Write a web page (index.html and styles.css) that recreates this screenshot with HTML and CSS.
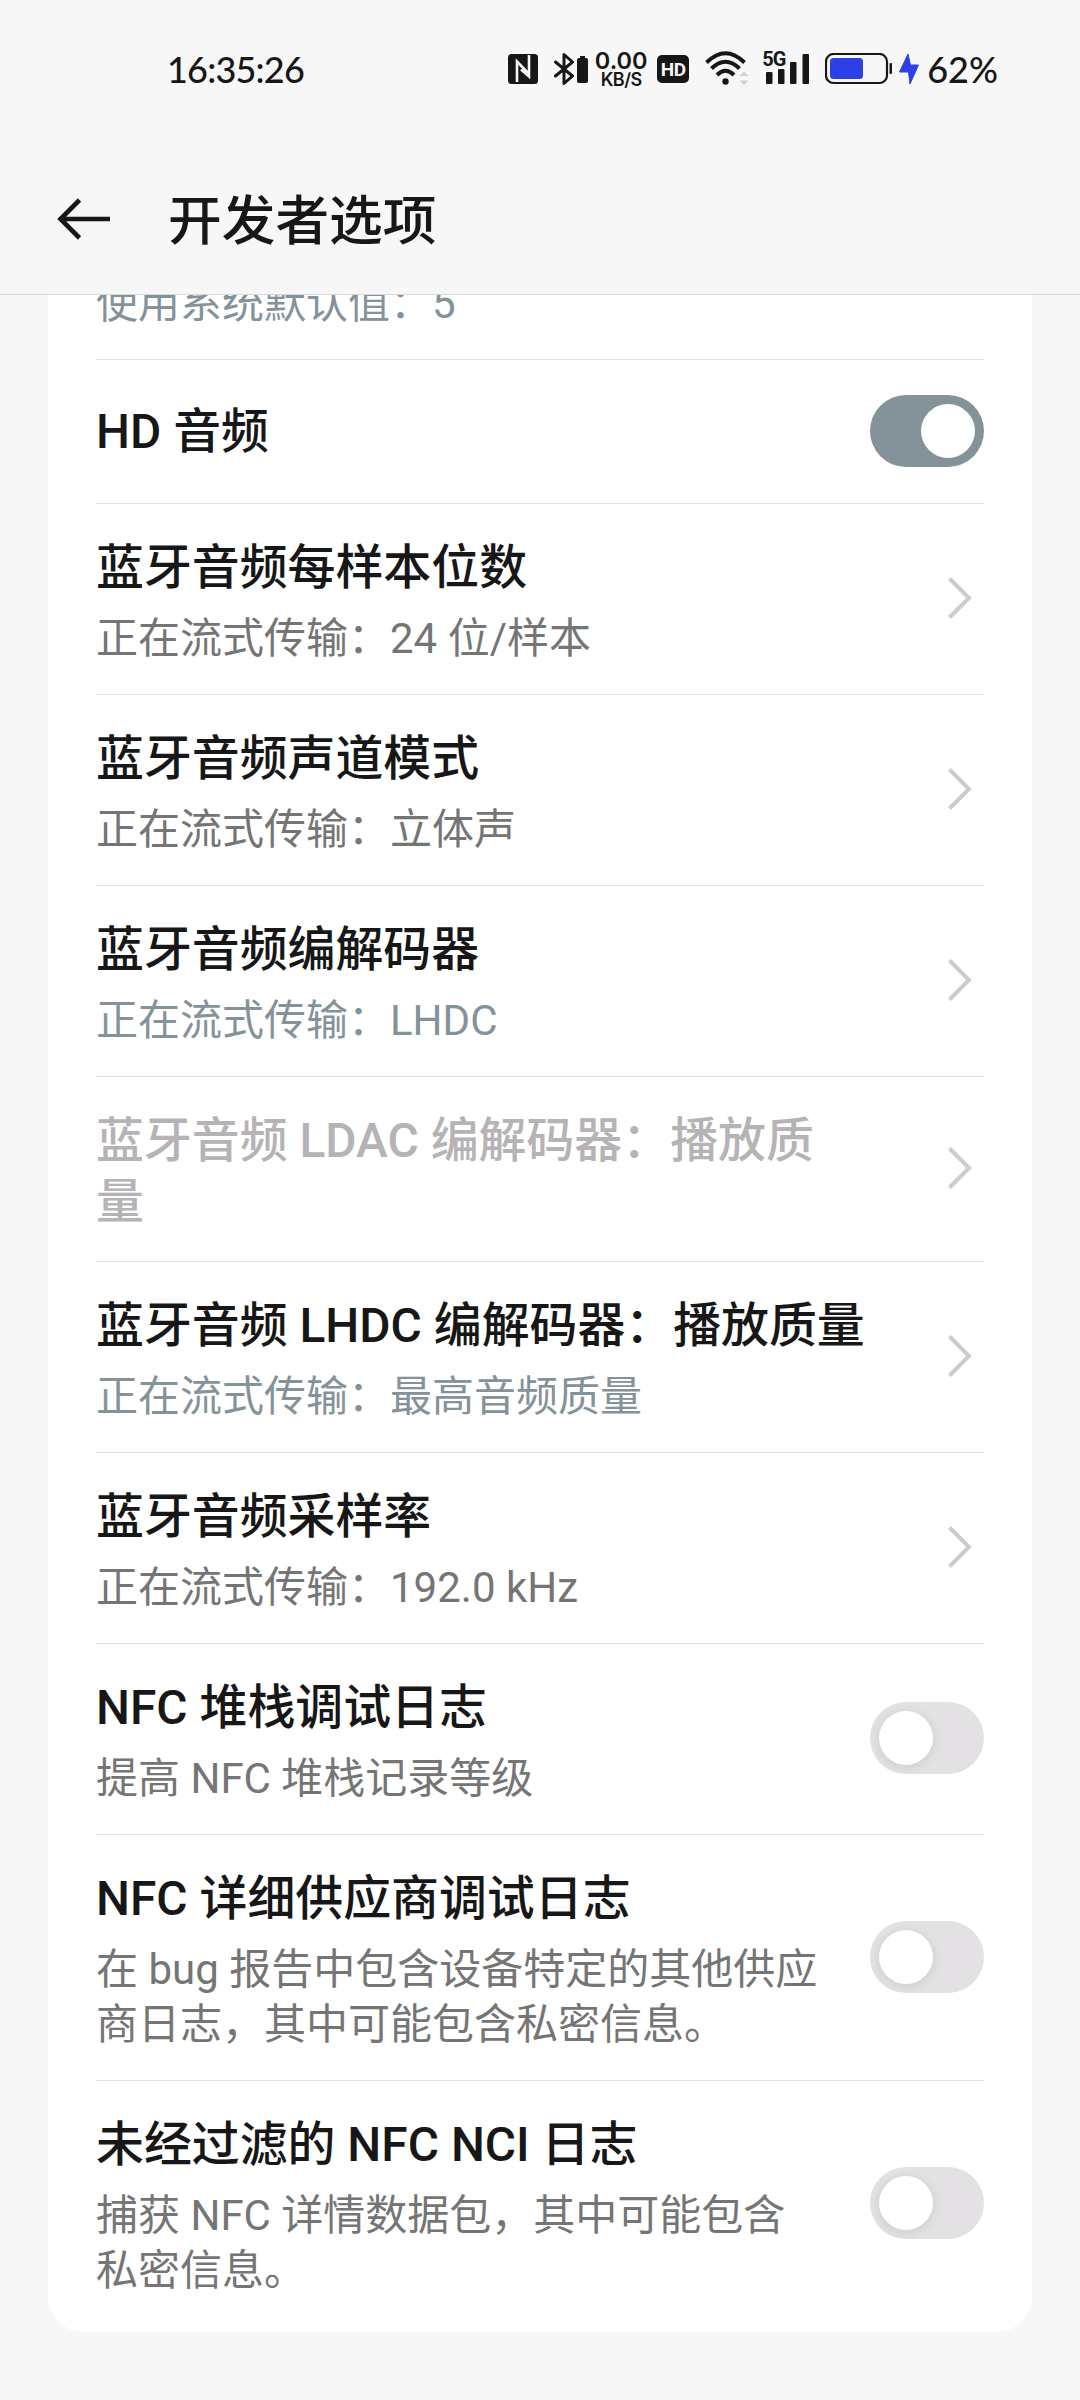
FILE: index.html
```html
<!DOCTYPE html>
<html lang="zh-CN">
<head>
  <meta charset="UTF-8">
  <title>开发者选项</title>
  <link rel="stylesheet" href="styles.css">
</head>
<body>

  <!-- Shared chevron -->
  <svg class="defs" width="0" height="0">
    <symbol id="chevron" viewBox="0 0 24 42">
      <path d="M1.5 1.5 L21 21 L1.5 40.5" fill="none" stroke="#cccccc" stroke-width="4"/>
    </symbol>
  </svg>

  <!-- Status bar -->
  <div class="status-bar">
    <span class="time">16:35:26</span>
    <div class="status-icons">
      <svg class="nfc" width="30" height="30" viewBox="0 0 30 30">
        <rect width="30" height="30" rx="3.5" fill="#171717"/>
        <path d="M9 28 V7.5 L20 19" fill="none" stroke="#f7f7f7" stroke-width="2.6"/>
        <path d="M21 1 V22.5 L13 15.5" fill="none" stroke="#f7f7f7" stroke-width="2.6"/>
      </svg>
      <svg class="bluetooth" width="34" height="34" viewBox="0 0 34 34">
        <path d="M1.5 10 L18.5 24 L10 31.5 V2.5 L18.5 10 L1.5 24" fill="none" stroke="#171717" stroke-width="3" stroke-linejoin="round" stroke-linecap="round"/>
        <rect x="26" y="4" width="5" height="3" fill="#171717"/>
        <rect x="23" y="6" width="11" height="25" rx="2" fill="#171717"/>
      </svg>
      <div class="speed">
        <span class="speed-value">0.00</span>
        <span class="speed-unit">KB/S</span>
      </div>
      <span class="hd">HD</span>
      <svg class="wifi" width="46" height="36" viewBox="0 0 46 36">
        <g fill="none" stroke="#171717" stroke-width="4">
          <path d="M1.5 11.5 Q20.5 -7 39.5 11.5"/>
          <path d="M6.5 17.5 Q20.5 4 34.5 17.5"/>
          <path d="M12 24 Q20.5 15.5 29 24"/>
        </g>
        <circle cx="20.5" cy="30.5" r="3.2" fill="#171717"/>
        <path d="M34.5 25 L39 20.5 L43.5 25 Z M34.5 29.5 H43.5 L39 34 Z" fill="#cfcfcf"/>
      </svg>
      <div class="signal">
        <span class="network">5G</span>
        <svg width="44" height="30" viewBox="0 0 44 30">
          <g fill="#171717">
            <rect x="0" y="18" width="6.5" height="12" rx="1"/>
            <rect x="12" y="15" width="6.5" height="15" rx="1"/>
            <rect x="24" y="8" width="6.5" height="22" rx="1"/>
            <rect x="36.5" y="0" width="6.5" height="30" rx="1"/>
          </g>
        </svg>
      </div>
      <svg class="battery" width="68" height="32" viewBox="0 0 68 32">
        <rect x="1" y="1" width="61" height="29" rx="7.5" fill="none" stroke="#171717" stroke-width="2.2"/>
        <rect x="5" y="5" width="33" height="21" rx="3.5" fill="#2d40e3"/>
        <rect x="64.5" y="10" width="2.5" height="11" rx="1" fill="#171717"/>
      </svg>
      <svg class="bolt" width="20" height="32" viewBox="0 0 20 32">
        <path d="M9 1 L0.5 19 H9.5 L11 31 L19.5 12 H11.5 Z" fill="#2d40e3" stroke="#2d40e3" stroke-width="1" stroke-linejoin="round"/>
      </svg>
      <span class="percent">62%</span>
    </div>
  </div>

  <!-- Title bar -->
  <div class="header">
    <svg class="back" width="54" height="42" viewBox="0 0 54 42">
      <path d="M53 21 H4 M22.5 2 L3.5 21 L22.5 40" fill="none" stroke="#171717" stroke-width="4.6"/>
    </svg>
    <h1>开发者选项</h1>
  </div>

  <div class="card">
    <div class="row clipped">
      <div class="summary accent">使用系统默认值：5</div>
    </div>

    <div class="row single">
      <div class="title">HD 音频</div>
      <div class="switch on"></div>
    </div>

    <div class="row">
      <div class="text">
        <div class="title">蓝牙音频每样本位数</div>
        <div class="summary">正在流式传输：24 位/样本</div>
      </div>
      <svg class="chevron"><use href="#chevron"/></svg>
    </div>

    <div class="row">
      <div class="text">
        <div class="title">蓝牙音频声道模式</div>
        <div class="summary">正在流式传输：立体声</div>
      </div>
      <svg class="chevron"><use href="#chevron"/></svg>
    </div>

    <div class="row">
      <div class="text">
        <div class="title">蓝牙音频编解码器</div>
        <div class="summary accent">正在流式传输：LHDC</div>
      </div>
      <svg class="chevron"><use href="#chevron"/></svg>
    </div>

    <div class="row disabled">
      <div class="text">
        <div class="title">蓝牙音频 LDAC 编解码器：播放质<br>量</div>
      </div>
      <svg class="chevron"><use href="#chevron"/></svg>
    </div>

    <div class="row">
      <div class="text">
        <div class="title">蓝牙音频 LHDC 编解码器：播放质量</div>
        <div class="summary accent">正在流式传输：最高音频质量</div>
      </div>
      <svg class="chevron"><use href="#chevron"/></svg>
    </div>

    <div class="row">
      <div class="text">
        <div class="title">蓝牙音频采样率</div>
        <div class="summary">正在流式传输：192.0 kHz</div>
      </div>
      <svg class="chevron"><use href="#chevron"/></svg>
    </div>

    <div class="row">
      <div class="text">
        <div class="title">NFC 堆栈调试日志</div>
        <div class="summary">提高 NFC 堆栈记录等级</div>
      </div>
      <div class="switch"></div>
    </div>

    <div class="row">
      <div class="text">
        <div class="title">NFC 详细供应商调试日志</div>
        <div class="summary">在 bug 报告中包含设备特定的其他供应<br>商日志，其中可能包含私密信息。</div>
      </div>
      <div class="switch"></div>
    </div>

    <div class="row">
      <div class="text">
        <div class="title">未经过滤的 NFC NCI 日志</div>
        <div class="summary">捕获 NFC 详情数据包，其中可能包含<br>私密信息。</div>
      </div>
      <div class="switch"></div>
    </div>
  </div>

</body>
</html>
```
FILE: styles.css
```css
* {
  box-sizing: border-box;
}
body {
  margin: 0;
  height: 2400px;
  overflow: hidden;
  background: #f7f7f7;
  color: #171717;
  font-family: Roboto, "Noto Sans CJK SC", sans-serif;
}
svg {
  display: block;
  flex: none;
}
.defs {
  position: absolute;
}

/* Status bar */
.status-bar {
  display: flex;
  justify-content: space-between;
  align-items: center;
  height: 137px;
  padding: 0 82px 0 167px;
}
.time, .percent {
  font-family: Lato, sans-serif;
  font-size: 36px;
  line-height: 40px;
  font-weight: 500;
}
.time {
  letter-spacing: -0.8px;
}
.status-icons {
  display: flex;
  align-items: center;
}
.bluetooth {
  margin-left: 16px;
}
.speed {
  display: flex;
  flex-direction: column;
  align-items: center;
  width: 54px;
  margin-left: 6px;
  padding-top: 2px;
  font-family: Inter, sans-serif;
  font-weight: 600;
}
.speed-value {
  font-size: 23.5px;
  line-height: 21px;
}
.speed-unit {
  font-size: 18px;
  line-height: 18px;
  letter-spacing: -0.5px;
}
.hd {
  width: 32px;
  height: 28px;
  margin-left: 9px;
  border-radius: 5px;
  background: #171717;
  color: #f7f7f7;
  font-size: 19px;
  line-height: 29px;
  font-weight: 700;
  letter-spacing: -0.5px;
  text-align: center;
}
.wifi {
  margin-left: 16px;
}
.signal {
  position: relative;
  margin-left: 15px;
}
.network {
  position: absolute;
  left: -4px;
  top: -4px;
  background: #f7f7f7;
  font-size: 20px;
  line-height: 19px;
  font-weight: 700;
  letter-spacing: -1px;
}
.battery {
  margin-left: 15px;
}
.bolt {
  margin-left: 6px;
}
.percent {
  margin-left: 8px;
}

/* Title bar */
.header {
  display: flex;
  align-items: center;
  height: 158px;
  padding: 6px 57px 0;
  border-bottom: 1px solid #d6d8da;
}
.header h1 {
  margin: 6px 0 0 57px;
  font-size: 53.7px;
  line-height: 72px;
  font-weight: 500;
}

/* Settings list */
.card {
  margin: 0 48px;
  padding: 0 48px 6px;
  background: #fff;
  border-radius: 0 0 36px 36px;
}
.row {
  display: flex;
  justify-content: space-between;
  align-items: center;
  padding-bottom: 2px;
  border-bottom: 1px solid #e2e2e2;
}
.row:last-child {
  border-bottom: none;
}
.row.single {
  height: 144px;
}
.row.single .title {
  padding-top: 4px;
}
.row.clipped {
  align-items: flex-end;
  height: 65px;
  padding-bottom: 28px;
  overflow: hidden;
}
.row.clipped .summary {
  margin-top: 0;
}
.row.disabled .title {
  color: #b5b3b5;
}
.text {
  padding: 34px 0 26px;
}
.title {
  font-size: 47.9px;
  line-height: 61px;
  font-weight: 500;
  white-space: nowrap;
}
.summary {
  margin-top: 12px;
  color: #757575;
  font-size: 42px;
  line-height: 55px;
  white-space: nowrap;
}
.summary.accent {
  color: #84929a;
}
.chevron {
  width: 24px;
  height: 42px;
  margin-right: 12px;
}
.switch {
  display: flex;
  flex: none;
  width: 114px;
  height: 72px;
  padding: 9px;
  border-radius: 36px;
  background: #e3e1e3;
}
.switch::before {
  content: "";
  width: 54px;
  height: 54px;
  border-radius: 50%;
  background: #fff;
  box-shadow: 0 2px 12px rgba(0, 0, 0, 0.1);
}
.switch.on {
  justify-content: flex-end;
  background: #84929a;
}
.switch.on::before {
  box-shadow: none;
}
```
